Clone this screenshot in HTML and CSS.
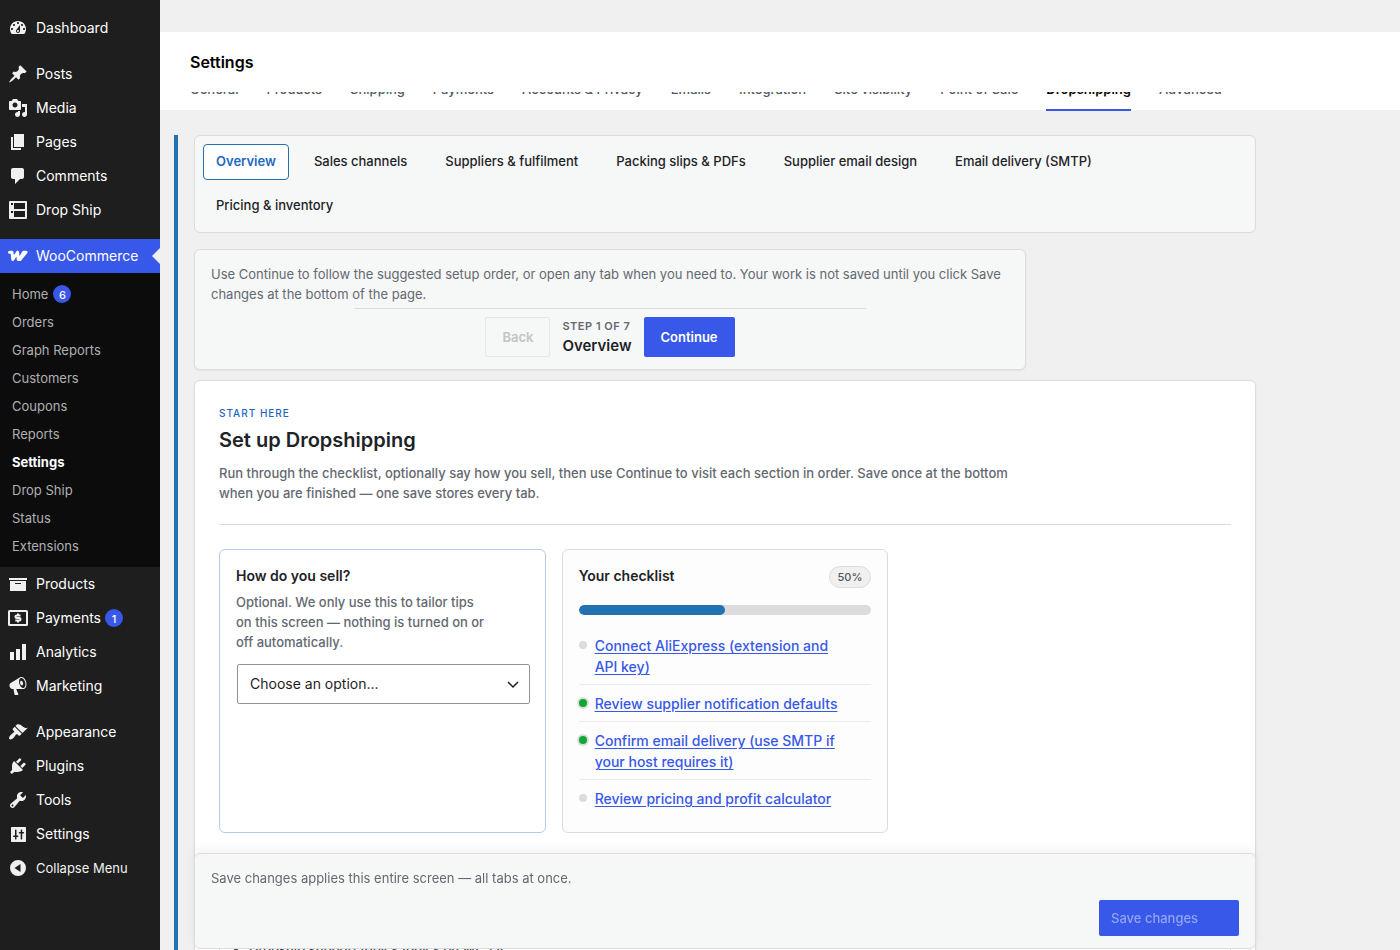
FILE: index.html
```html
<!DOCTYPE html>
<html lang="en">
<head>
<meta charset="utf-8">
<meta name="viewport" content="width=device-width, initial-scale=1">
<title>Settings</title>
<link rel="stylesheet" href="styles.css">
</head>
<body>
<div class="app">
  <nav class="sidebar" aria-label="Main menu">
    <ul class="menu-group">
      <li><a class="menu-item" href="#"><svg class="icon" viewBox="0 0 20 20"><path d="M3.76 16h12.48c1.1-1.37 1.76-3.11 1.76-5 0-4.42-3.58-8-8-8s-8 3.58-8 8c0 1.89.66 3.63 1.76 5zM10 4c.55 0 1 .45 1 1s-.45 1-1 1-1-.45-1-1 .45-1 1-1zM6 6c.55 0 1 .45 1 1s-.45 1-1 1-1-.45-1-1 .45-1 1-1zm8 0c.55 0 1 .45 1 1s-.45 1-1 1-1-.45-1-1 .45-1 1-1zm-5.37 5.55L12 7v6c0 1.1-.9 2-2 2s-2-.9-2-2c0-.57.24-1.08.63-1.45zM4 10c.55 0 1 .45 1 1s-.45 1-1 1-1-.45-1-1 .45-1 1-1zm12 0c.55 0 1 .45 1 1s-.45 1-1 1-1-.45-1-1 .45-1 1-1zm-5 3c0-.55-.45-1-1-1s-1 .45-1 1 .45 1 1 1 1-.45 1-1z"/></svg>Dashboard</a></li>
    </ul>
    <ul class="menu-group">
      <li><a class="menu-item" href="#"><svg class="icon" viewBox="0 0 20 20"><path d="M10.44 3.02l1.82-1.82 6.36 6.35-1.83 1.82c-1.05-.68-2.48-.57-3.41.36l-.75.75c-.92.93-1.04 2.35-.35 3.41l-1.83 1.82-2.41-2.41-2.8 2.79c-.42.42-3.38 2.71-3.8 2.29s1.86-3.39 2.28-3.81l2.79-2.79L4.1 9.36l1.83-1.82c1.05.69 2.48.57 3.4-.36l.75-.75c.93-.92 1.05-2.35.36-3.41z"/></svg>Posts</a></li>
      <li><a class="menu-item" href="#"><svg class="icon" viewBox="0 0 20 20"><path d="M13 11V4c0-.55-.45-1-1-1h-1.67L9 1H5L3.67 3H2c-.55 0-1 .45-1 1v7c0 .55.45 1 1 1h10c.55 0 1-.45 1-1zM7 4.5c1.38 0 2.5 1.12 2.5 2.5S8.38 9.5 7 9.5 4.5 8.38 4.5 7 5.62 4.5 7 4.5zM14 6h5v10.5c0 1.38-1.12 2.5-2.5 2.5S14 17.88 14 16.5s1.12-2.5 2.5-2.5c.17 0 .34.02.5.05V9h-3V6zm-4 8.05V13h2v3.5c0 1.38-1.12 2.5-2.5 2.5S7 17.88 7 16.5 8.12 14 9.5 14c.17 0 .34.02.5.05z"/></svg>Media</a></li>
      <li><a class="menu-item" href="#"><svg class="icon" viewBox="0 0 20 20"><path d="M6 15V2h10v13H6zm-1 1h8v2H3V5h2v11z"/></svg>Pages</a></li>
      <li><a class="menu-item" href="#"><svg class="icon" viewBox="0 0 20 20"><path d="M5 2h9c1.1 0 2 .9 2 2v7c0 1.1-.9 2-2 2h-2l-5 5v-5H5c-1.1 0-2-.9-2-2V4c0-1.1.9-2 2-2z"/></svg>Comments</a></li>
      <li><a class="menu-item" href="#"><svg class="icon" viewBox="0 0 20 20"><path d="M2 1h16a1 1 0 0 1 1 1v16a1 1 0 0 1-1 1H2a1 1 0 0 1-1-1V2a1 1 0 0 1 1-1zM6 3v6h11V3zM6 11v6h11v-6zM3 3v2h2V3zM3 11v2h2v-2z"/></svg>Drop Ship</a></li>
    </ul>
    <ul class="menu-group">
      <li>
        <a class="menu-item menu-item-current" href="#"><svg class="icon" viewBox="0 0 20 20"><path class="icon-woo" d="M1.500 6.200H4L4.800 13.500 9.600 6.200 10.300 13.500H12L18 6.200H15.600L11.600 13"/></svg>WooCommerce</a>
        <ul class="submenu">
          <li><a class="submenu-item" href="#">Home <span class="count">6</span></a></li>
          <li><a class="submenu-item" href="#">Orders</a></li>
          <li><a class="submenu-item" href="#">Graph Reports</a></li>
          <li><a class="submenu-item" href="#">Customers</a></li>
          <li><a class="submenu-item" href="#">Coupons</a></li>
          <li><a class="submenu-item" href="#">Reports</a></li>
          <li><a class="submenu-item submenu-item-current" href="#">Settings</a></li>
          <li><a class="submenu-item" href="#">Drop Ship</a></li>
          <li><a class="submenu-item" href="#">Status</a></li>
          <li><a class="submenu-item" href="#">Extensions</a></li>
        </ul>
      </li>
      <li><a class="menu-item" href="#"><svg class="icon" viewBox="0 0 20 20"><path d="M19 4v2H1V4h18zM2 7h16v10H2V7zm11 3V9H7v1h6z"/></svg>Products</a></li>
      <li><a class="menu-item" href="#"><svg class="icon" viewBox="0 0 20 20"><path d="M1.500 2h17A1.500 1.500 0 0 1 20 3.500v13a1.500 1.500 0 0 1-1.500 1.500h-17A1.500 1.500 0 0 1 0 16.500v-13A1.500 1.500 0 0 1 1.500 2zM2 4v12h16V4z"/><path class="icon-line" d="M12.500 7.500H8.700a1.200 1.200 0 0 0 0 2.500h2.600a1.200 1.200 0 0 1 0 2.500H7.300M10 5.500v2M10 12.500v2"/></svg>Payments <span class="count">1</span></a></li>
      <li><a class="menu-item" href="#"><svg class="icon" viewBox="0 0 20 20"><path d="M18 18V2h-4v16h4zm-6 0V7H8v11h4zm-6 0v-8H2v8h4z"/></svg>Analytics</a></li>
      <li><a class="menu-item" href="#"><svg class="icon" viewBox="0 0 20 20"><path d="M18.150 5.940c.46 1.620.38 3.220-.02 4.480-.42 1.280-1.260 2.180-2.300 2.480-.16.060-.26.060-.4.060-.06.020-.12.020-.18.020-.06.020-.14.020-.22.020h-6.800l2.220 5.500c.02.140-.06.260-.14.340-.08.100-.24.160-.34.160H6.950c-.1 0-.26-.06-.34-.16-.08-.08-.16-.2-.14-.34l-1-5.500H4.250l-.02-.02c-.5.060-1.080-.18-1.540-.62s-.88-1.080-1.060-1.880c-.24-.8-.2-1.560-.02-2.200.18-.62.58-1.080 1.060-1.300l.02-.02 9-5.400c.1-.06.18-.1.24-.16.060-.04.140-.08.240-.12.160-.08.280-.12.500-.18 1.040-.3 2.240.1 3.220.98s1.840 2.240 2.260 3.860zm-2.580 5.980h-.02c.4-.1.740-.34 1.040-.7.580-.7.860-1.760.86-3.040 0-.64-.1-1.300-.28-1.980-.34-1.360-1.020-2.500-1.780-3.240s-1.680-1.100-2.460-.88c-.82.220-1.400.960-1.700 2-.32 1.040-.28 2.360.060 3.720.380 1.360 1 2.500 1.800 3.240.780.740 1.620 1.100 2.480.880zm-2.540-7.080c.22-.04.42-.02.62.040.380.160.760.480 1.020 1s.42 1.200.42 1.780c0 .3-.04.560-.12.800-.18.480-.44.840-.86.940-.34.100-.8-.06-1.140-.4s-.64-.86-.78-1.500c-.18-.62-.12-1.240.020-1.720s.48-.84.820-.94z"/></svg>Marketing</a></li>
    </ul>
    <ul class="menu-group">
      <li><a class="menu-item" href="#"><svg class="icon" viewBox="0 0 20 20"><path d="M14.480 11.060L7.410 3.990l1.500-1.500c.5-.56 2.300-.47 3.510.320 1.210.800 1.430 1.280 2.910 2.100 1.180.640 2.450 1.260 4.450.850zm-.71.710L6.700 4.700 4.930 6.470c-.39.390-.39 1.020 0 1.410l1.060 1.060c.39.390.39 1.030 0 1.420-.6.600-1.430 1.110-2.210 1.690-.35.260-.7.530-1.010.840C1.430 14.230.4 16.080 1.400 17.070c.99 1 2.840-.03 4.180-1.360.31-.31.58-.66.85-1.020.57-.78 1.080-1.610 1.690-2.210.39-.39 1.020-.39 1.410 0l1.060 1.060c.39.390 1.020.390 1.410 0z"/></svg>Appearance</a></li>
      <li><a class="menu-item" href="#"><svg class="icon" viewBox="0 0 20 20"><path d="M13.110 4.360L9.870 7.600 8 5.730l3.240-3.240c.35-.34 1.050-.2 1.560.320.520.510.660 1.210.310 1.550zm-8 1.770l.91-1.120 9.010 9.010-1.190.840c-.71.710-2.630 1.160-3.820 1.160H6.140L4.900 17.260c-.59.590-1.540.590-2.120 0-.59-.58-.59-1.530 0-2.120l1.240-1.240v-3.880c0-1.130.4-3.190 1.090-3.890zm7.260 3.970l3.240-3.240c.34-.35 1.040-.21 1.550.310.520.510.660 1.210.310 1.550l-3.240 3.250z"/></svg>Plugins</a></li>
      <li><a class="menu-item" href="#"><svg class="icon" viewBox="0 0 20 20"><path d="M16.680 9.770c-1.340 1.340-3.300 1.670-4.950.990l-5.410 6.520c-.99.990-2.590.990-3.580 0s-.99-2.590 0-3.570l6.520-5.420c-.68-1.650-.35-3.610.99-4.950 1.280-1.280 3.120-1.620 4.720-1.060l-2.890 2.890 2.820 2.820 2.860-2.870c.53 1.580.18 3.390-1.080 4.650zM3.810 16.210c.4.390 1.040.390 1.430 0 .4-.4.4-1.040 0-1.430-.39-.4-1.030-.4-1.430 0-.39.390-.39 1.030 0 1.430z"/></svg>Tools</a></li>
      <li><a class="menu-item" href="#"><svg class="icon" viewBox="0 0 20 20"><path d="M18 17V4c0-.6-.4-1-1-1H4c-.6 0-1 .4-1 1v13c0 .6.4 1 1 1h13c.6 0 1-.4 1-1zM8.500 11.500h1.200c.4 0 .8.300.8.800s-.4.800-.8.800H8.500V15c0 .3-.2.500-.5.500h-.5c-.3 0-.5-.2-.5-.5v-1.900H5.800c-.4 0-.8-.3-.8-.8s.4-.8.8-.8H7V6c0-.3.200-.5.500-.5H8c.3 0 .5.200.5.500zM12.700 9.500h-1.200c-.4 0-.8-.3-.8-.8s.4-.8.800-.8h1.200V6c0-.3.2-.5.500-.5h.5c.3 0 .5.200.5.500v1.900h1.200c.4 0 .8.300.8.800s-.4.800-.8.800h-1.200V15c0 .3-.2.500-.5.500h-.5c-.3 0-.5-.2-.5-.5z"/></svg>Settings</a></li>
      <li><button type="button" class="menu-item menu-collapse"><svg class="icon" viewBox="0 0 20 20"><path d="M10 2a8 8 0 1 1 0 16 8 8 0 0 1 0-16zM12.500 6L6.500 10l6 4z"/></svg>Collapse Menu</button></li>
    </ul>
  </nav>

  <main class="main">
    <header class="page-header"><h1 class="page-title">Settings</h1></header>
    <nav class="section-nav" aria-label="Settings sections">
      <a href="#">General</a>
      <a href="#">Products</a>
      <a href="#">Shipping</a>
      <a href="#">Payments</a>
      <a href="#">Accounts &amp; Privacy</a>
      <a href="#">Emails</a>
      <a href="#">Integration</a>
      <a href="#">Site visibility</a>
      <a href="#">Point of Sale</a>
      <a class="section-current" href="#">Dropshipping</a>
      <a href="#">Advanced</a>
    </nav>

    <form class="content">
      <nav class="tabs" aria-label="Dropshipping tabs">
        <a class="tab tab-current" href="#">Overview</a>
        <a class="tab" href="#">Sales channels</a>
        <a class="tab" href="#">Suppliers &amp; fulfilment</a>
        <a class="tab" href="#">Packing slips &amp; PDFs</a>
        <a class="tab" href="#">Supplier email design</a>
        <a class="tab" href="#">Email delivery (SMTP)</a>
        <a class="tab" href="#">Pricing &amp; inventory</a>
      </nav>

      <section class="guide">
        <p class="guide-text">Use Continue to follow the suggested setup order, or open any tab when you need to. Your work is not saved until you click Save changes at the bottom of the page.</p>
        <div class="stepper">
          <button type="button" class="btn btn-back" disabled>Back</button>
          <div class="step">
            <span class="step-count">Step 1 of 7</span>
            <strong class="step-name">Overview</strong>
          </div>
          <button type="button" class="btn btn-primary">Continue</button>
        </div>
      </section>

      <section class="panel">
        <header class="panel-header">
          <p class="eyebrow">Start here</p>
          <h2 class="panel-title">Set up Dropshipping</h2>
          <p class="lead">Run through the checklist, optionally say how you sell, then use Continue to visit each section in order. Save once at the bottom when you are finished — one save stores every tab.</p>
        </header>
        <div class="cards">
          <section class="card card-sell">
            <label class="card-title" for="sell-mode">How do you sell?</label>
            <p class="card-text">Optional. We only use this to tailor tips on this screen — nothing is turned on or off automatically.</p>
            <div class="select-wrap">
              <select class="select" id="sell-mode"><option>Choose an option...</option></select>
              <svg class="chevron" viewBox="0 0 12 8"><path d="M1 1l5 5 5-5"/></svg>
            </div>
          </section>
          <section class="card card-checklist">
            <div class="card-head">
              <h3 class="card-title">Your checklist</h3>
              <span class="pill">50%</span>
            </div>
            <div class="progress" role="progressbar" aria-label="Checklist progress" aria-valuenow="50" aria-valuemin="0" aria-valuemax="100"><div class="progress-fill" style="width: 50%"></div></div>
            <ul class="checklist">
              <li class="check"><a href="#">Connect AliExpress (extension and API key)</a></li>
              <li class="check check-done"><a href="#">Review supplier notification defaults</a></li>
              <li class="check check-done"><a href="#">Confirm email delivery (use SMTP if your host requires it)</a></li>
              <li class="check"><a href="#">Review pricing and profit calculator</a></li>
            </ul>
          </section>
        </div>
        <section class="card card-help">
          <ul class="help-list">
            <li>Dropship support topics topics on WC.LV</li>
          </ul>
        </section>
      </section>

      <footer class="save-bar">
        <p class="save-note">Save changes applies this entire screen — all tabs at once.</p>
        <button type="submit" class="btn-save" disabled>Save changes</button>
      </footer>
    </form>
  </main>
</div>
</body>
</html>
```

FILE: styles.css
```css
:root {
  --ink: #1d2327;
  --muted: #646970;
  --line: #dcdcde;
  --surface: #f6f7f7;
  --page: #f0f0f0;
  --primary: #3858e9;
  --blue: #2271b1;
}

* { box-sizing: border-box; }

body {
  margin: 0;
  background: var(--page);
  color: var(--ink);
  font: 13px/20px Inter, "Liberation Sans", sans-serif;
}

h1, h2, h3, p, ul { margin: 0; padding: 0; }
ul { list-style: none; }
a { color: inherit; text-decoration: none; }
button, select { font: inherit; }

.app {
  display: grid;
  grid-template-columns: 160px minmax(0, 1fr);
  height: 100vh;
  overflow: hidden;
}

/* Sidebar */
.sidebar {
  display: flex;
  flex-direction: column;
  gap: 12px;
  padding-top: 11px;
  background: #1e1e1e;
  overflow: hidden;
}

.menu-item {
  position: relative;
  display: flex;
  align-items: center;
  gap: 8px;
  width: 100%;
  height: 34px;
  padding: 0 8px;
  color: #fff;
  font-size: 14px;
}

.menu-item-current { background: var(--primary); }

.menu-item-current::after {
  content: "";
  position: absolute;
  right: 0;
  top: 9px;
  border: 8px solid transparent;
  border-left-width: 0;
  border-right-color: var(--page);
}

.menu-collapse {
  border: 0;
  background: none;
  color: #f0f0f1;
  font-size: 13px;
  text-align: left;
}

.icon {
  flex: none;
  width: 20px;
  height: 20px;
  fill: #f0f0f1;
  fill-rule: evenodd;
}

.icon-line {
  fill: none;
  stroke: #f0f0f1;
  stroke-width: 2;
}

.icon-woo {
  fill: none;
  stroke: #fff;
  stroke-width: 3;
  stroke-linecap: round;
  stroke-linejoin: round;
}

.submenu {
  padding: 7px 0;
  background: #0c0c0c;
}

.submenu-item {
  display: flex;
  align-items: center;
  gap: 5px;
  height: 28px;
  padding: 0 12px;
  color: #b0b0b1;
}

.submenu-item-current {
  color: #fff;
  font-weight: 700;
}

.count {
  display: grid;
  place-items: center;
  width: 18px;
  height: 18px;
  border-radius: 9px;
  background: var(--primary);
  color: #fff;
  font-size: 11px;
  font-weight: 500;
}

.menu-item .count { margin-left: -4px; }

/* Page header */
.main {
  height: 100vh;
  overflow-y: auto;
  scrollbar-width: none;
}

.page-header {
  position: sticky;
  top: 32px;
  z-index: 2;
  display: flex;
  align-items: center;
  height: 60px;
  margin-top: 32px;
  padding: 0 30px;
  background: #fff;
}

.page-title {
  color: #000;
  font-size: 16px;
  font-weight: 600;
}

.section-nav {
  display: flex;
  gap: 28px;
  height: 32px;
  margin-top: -13px;
  padding: 0 30px;
  background: linear-gradient(#fff, #fff) no-repeat 0 0 / 100% 31px;
  color: #50575e;
  font-weight: 500;
  white-space: nowrap;
}

.section-current {
  border-bottom: 2px solid var(--primary);
  color: #000;
  font-weight: 600;
}

/* Content */
.content {
  max-width: 1082px;
  margin: 24px 0 0 14px;
  padding-left: 16px;
  border-left: 4px solid var(--blue);
}

.tabs {
  display: flex;
  flex-wrap: wrap;
  gap: 8px 12px;
  padding: 8px;
  border: 1px solid var(--line);
  border-radius: 6px;
  background: var(--surface);
}

.tab {
  height: 36px;
  padding: 6px 12px;
  border: 1px solid transparent;
  border-radius: 4px;
  font-weight: 500;
}

.tab-current {
  border-color: var(--blue);
  background: #fff;
  color: #1d68c0;
  font-weight: 600;
}

.guide {
  max-width: 832px;
  margin: 16px 0 10px;
  padding: 14px 16px 12px;
  border: 1px solid var(--line);
  border-radius: 6px;
  background: var(--surface);
  box-shadow: 0 1px 2px rgba(0, 0, 0, .05);
  color: var(--muted);
}

.stepper {
  display: flex;
  justify-content: center;
  align-items: center;
  gap: 12px;
  max-width: 512px;
  margin: 4px auto 0;
  padding-top: 8px;
  border-top: 1px solid var(--line);
}

.btn {
  height: 40px;
  padding: 0 16px;
  border: 1px solid transparent;
  border-radius: 2px;
  font-weight: 600;
}

.btn-primary {
  background: var(--primary);
  color: #fff;
}

.btn-back {
  border-color: #e6e7e7;
  background: none;
  color: #c3c4c7;
}

.step {
  display: flex;
  flex-direction: column;
}

.step-count {
  font-size: 11px;
  font-weight: 600;
  letter-spacing: 0.5px;
  line-height: 18px;
  text-transform: uppercase;
}

.step-name {
  color: var(--ink);
  font-size: 15px;
  font-weight: 600;
  line-height: 22px;
}

.panel {
  padding: 22px 24px 24px;
  border: 1px solid var(--line);
  border-radius: 6px;
  background: #fff;
  box-shadow: 0 1px 3px rgba(0, 0, 0, .05);
}

.panel-header {
  padding-bottom: 21px;
  border-bottom: 1px solid var(--line);
}

.eyebrow {
  color: #1d68c0;
  font-size: 10px;
  font-weight: 500;
  letter-spacing: 1px;
  text-transform: uppercase;
}

.panel-title {
  margin: 2px 0 8px;
  font-size: 20px;
  font-weight: 600;
  line-height: 30px;
}

.lead {
  max-width: 820px;
  color: var(--muted);
  font-weight: 500;
}

.cards {
  display: grid;
  grid-template-columns: repeat(3, minmax(0, 1fr));
  gap: 16px;
  margin: 24px 0;
}

.card {
  padding: 16px;
  border: 1px solid var(--line);
  border-radius: 6px;
}

.card-sell { border-color: #b5cae6; }
.card-checklist { background: #fdfdfd; }

.card-title {
  display: block;
  font-size: 14px;
  font-weight: 600;
}

.card-text {
  max-width: 254px;
  margin: 6px 0 12px;
  color: var(--muted);
  font-weight: 500;
}

.select-wrap {
  position: relative;
  margin: 0 -1px 0 1px;
}

.select {
  appearance: none;
  display: block;
  width: 100%;
  height: 40px;
  padding: 0 36px 0 12px;
  border: 1px solid #949494;
  border-radius: 2px;
  background: #fff;
  color: #1e1e1e;
  font-size: 14px;
}

.chevron {
  position: absolute;
  right: 11px;
  top: 17px;
  width: 12px;
  height: 8px;
  fill: none;
  stroke: #1e1e1e;
  stroke-width: 1.5;
  pointer-events: none;
}

.card-head {
  display: flex;
  justify-content: space-between;
  align-items: flex-start;
}

.pill {
  padding: 0 8px;
  border: 1px solid var(--line);
  border-radius: 11px;
  background: #f0f0f1;
  color: #50575e;
  font-size: 11px;
  font-weight: 500;
}

.progress {
  height: 10px;
  margin: 17px 0 12px;
  border-radius: 5px;
  background: var(--line);
  overflow: hidden;
}

.progress-fill {
  height: 100%;
  border-radius: 5px;
  background: var(--blue);
}

.check {
  display: flex;
  gap: 8px;
  padding: 8px 0 7px;
  border-bottom: 1px solid #ebebec;
  color: var(--primary);
  font-size: 14px;
  font-weight: 500;
  line-height: 21px;
}

.check:last-child { border-bottom: 0; }

.check::before {
  content: "";
  flex: none;
  width: 8px;
  height: 8px;
  margin-top: 6px;
  border-radius: 50%;
  background: var(--line);
}

.check-done::before {
  background: #10a633;
  box-shadow: 0 0 0 2px var(--line);
}

.check a {
  max-width: 256px;
  text-decoration: underline;
  text-underline-offset: 2px;
}

.help-list {
  padding: 65px 0 120px 13px;
  color: #3c434a;
  font-weight: 500;
  list-style: disc;
}

.save-bar {
  position: sticky;
  bottom: 1px;
  z-index: 1;
  display: flex;
  flex-direction: column;
  gap: 12px;
  padding: 14px 16px 12px;
  border: 1px solid var(--line);
  border-radius: 6px;
  background: var(--surface);
  box-shadow: 0 -4px 12px rgba(0, 0, 0, .05);
  color: var(--muted);
}

.btn-save {
  align-self: flex-end;
  width: 140px;
  height: 36px;
  padding: 0 12px;
  border: 0;
  border-radius: 2px;
  background: var(--primary);
  color: #92a4f3;
  font-weight: 500;
  text-align: left;
}
```
